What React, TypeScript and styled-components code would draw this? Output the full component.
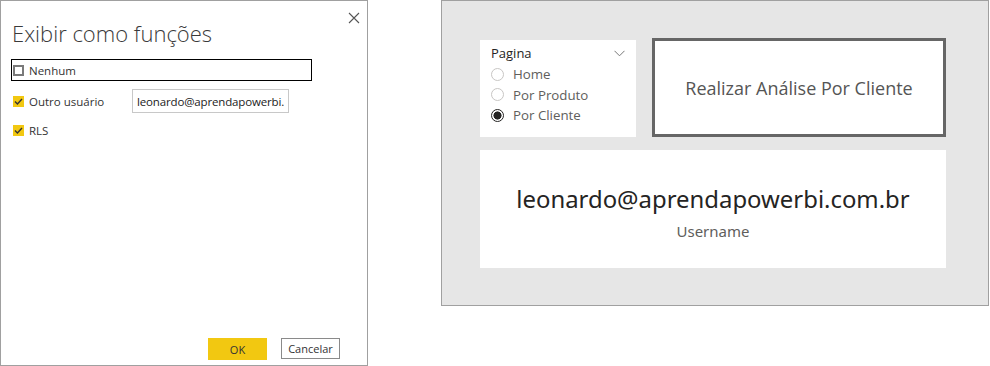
import styled, { createGlobalStyle } from 'styled-components';

const GlobalStyle = createGlobalStyle`
  html, body {
    margin: 0;
    padding: 0;
    background: #ffffff;
  }
  body {
    font-family: "Open Sans", "Noto Sans", sans-serif;
  }
`;

const CheckIcon = () => (
  <svg width="11" height="11" viewBox="0 0 11 11">
    <path d="M2 5.6 L4.4 8 L9 3" fill="none" stroke="#333" strokeWidth="1.4" />
  </svg>
);

const App = () => {
  const options = ['Home', 'Por Produto', 'Por Cliente'];
  const selected = 'Por Cliente';

  return (
    <>
      <GlobalStyle />
      <Page>
        <Dialog>
          <CloseButton>
            <svg width="12" height="12" viewBox="0 0 12 12">
              <path d="M1 1 L11 11 M11 1 L1 11" stroke="#555" strokeWidth="1.1" />
            </svg>
          </CloseButton>
          <DialogTitle>Exibir como funções</DialogTitle>

          <FocusRow>
            <CheckBox />
            <OptionLabel>Nenhum</OptionLabel>
          </FocusRow>

          <OptionRow>
            <CheckBox checked>
              <CheckIcon />
            </CheckBox>
            <OptionLabel>Outro usuário</OptionLabel>
            <UserInput readOnly value="leonardo@aprendapowerbi.com.br" />
          </OptionRow>

          <OptionRow>
            <CheckBox checked>
              <CheckIcon />
            </CheckBox>
            <OptionLabel>RLS</OptionLabel>
          </OptionRow>

          <DialogFooter>
            <PrimaryButton>OK</PrimaryButton>
            <SecondaryButton>Cancelar</SecondaryButton>
          </DialogFooter>
        </Dialog>

        <ReportCanvas>
          <TopRow>
            <Slicer>
              <SlicerHeader>
                <span>Pagina</span>
                <svg width="11" height="7" viewBox="0 0 11 7">
                  <path d="M0.5 0.8 L5.5 5.8 L10.5 0.8" fill="none" stroke="#777" strokeWidth="1" />
                </svg>
              </SlicerHeader>
              {options.map(opt => (
                <RadioRow key={opt}>
                  <Radio active={opt === selected} />
                  <RadioLabel>{opt}</RadioLabel>
                </RadioRow>
              ))}
            </Slicer>
            <ActionButton>Realizar Análise Por Cliente</ActionButton>
          </TopRow>

          <Card>
            <CardValue>leonardo@aprendapowerbi.com.br</CardValue>
            <CardLabel>Username</CardLabel>
          </Card>
        </ReportCanvas>
      </Page>
    </>
  );
};

const Page = styled.div`
  display: flex;
  align-items: flex-start;
  gap: 73px;
  width: 990px;
  height: 366px;
`;

const Dialog = styled.div`
  position: relative;
  box-sizing: border-box;
  width: 368px;
  height: 366px;
  border: 1px solid #a0a0a0;
  display: flex;
  flex-direction: column;
  padding: 0 0 0 10px;
  font-family: "Open Sans", "Noto Sans", sans-serif;
`;

const CloseButton = styled.div`
  position: absolute;
  top: 6px;
  right: 7px;
  width: 12px;
  height: 12px;
`;

const DialogTitle = styled.h1`
  margin: 17px 0 0 1px;
  font-size: 22px;
  font-weight: 300;
  color: #3a3a3a;
  line-height: 30px;
`;

const FocusRow = styled.div`
  display: flex;
  align-items: center;
  box-sizing: border-box;
  width: 301px;
  height: 22px;
  margin-top: 11px;
  border: 1px solid #000;
  padding-left: 1px;
`;

const OptionRow = styled.div`
  display: flex;
  align-items: center;
  height: 24px;
  margin-top: 8px;
  padding-left: 2px;
  & + & {
    margin-top: 5px;
  }
`;

const CheckBox = styled.div<{ checked?: boolean }>`
  box-sizing: border-box;
  width: 11px;
  height: 11px;
  display: flex;
  align-items: center;
  justify-content: center;
  background: ${p => (p.checked ? '#f2c811' : '#fff')};
  border: ${p => (p.checked ? 'none' : '2px solid #7a7a7a')};
  flex-shrink: 0;
`;

const OptionLabel = styled.span`
  margin-left: 5px;
  font-size: 11.5px;
  color: #333;
  width: 103px;
`;

const UserInput = styled.input`
  box-sizing: border-box;
  width: 157px;
  height: 24px;
  border: 1px solid #c8c8c8;
  padding: 0 4px;
  font-family: "Open Sans", "Noto Sans", sans-serif;
  font-size: 11.5px;
  letter-spacing: -0.15px;
  color: #222;
  outline: none;
`;

const DialogFooter = styled.div`
  margin-top: auto;
  display: flex;
  gap: 14px;
  padding: 0 0 5px 197px;
`;

const PrimaryButton = styled.button`
  width: 59px;
  height: 22px;
  border: none;
  background: #f2c811;
  font-family: "Open Sans", "Noto Sans", sans-serif;
  font-size: 11px;
  color: #333;
  padding: 0;
`;

const SecondaryButton = styled.button`
  width: 59px;
  height: 21px;
  border: 1px solid #8a8a8a;
  background: #fff;
  font-family: "Open Sans", "Noto Sans", sans-serif;
  font-size: 11px;
  color: #333;
  padding: 0;
`;

const ReportCanvas = styled.div`
  box-sizing: border-box;
  width: 548px;
  height: 306px;
  border: 1px solid #a0a0a0;
  background: #e6e6e6;
  padding: 37px 0 0 38px;
  display: flex;
  flex-direction: column;
  gap: 13px;
`;

const TopRow = styled.div`
  display: flex;
  gap: 16px;
  align-items: flex-start;
`;

const Slicer = styled.div`
  box-sizing: border-box;
  width: 156px;
  height: 97px;
  margin-top: 2px;
  background: #fff;
  padding: 3px 10px 0 11px;
  font-family: "Open Sans", "Noto Sans", sans-serif;
`;

const SlicerHeader = styled.div`
  display: flex;
  justify-content: space-between;
  align-items: center;
  height: 20px;
  font-size: 13px;
  color: #252423;
  margin-bottom: 1px;
  svg {
    margin-right: 1px;
  }
`;

const RadioRow = styled.div`
  display: flex;
  align-items: center;
  height: 20.5px;
`;

const Radio = styled.span<{ active?: boolean }>`
  box-sizing: border-box;
  width: 13px;
  height: 13px;
  border-radius: 50%;
  border: 1px solid ${p => (p.active ? '#252423' : '#c8c6c4')};
  background: ${p => (p.active ? 'radial-gradient(circle, #252423 0 3.8px, #fff 4.3px)' : '#fff')};
  flex-shrink: 0;
`;

const RadioLabel = styled.span`
  margin-left: 9px;
  font-size: 13.3px;
  color: #605e5c;
`;

const ActionButton = styled.div`
  box-sizing: border-box;
  width: 294px;
  height: 99px;
  border: 3px solid #666;
  background: #fff;
  display: flex;
  align-items: center;
  justify-content: center;
  font-family: "Open Sans", "Noto Sans", sans-serif;
  font-size: 18px;
  color: #555;
`;

const Card = styled.div`
  box-sizing: border-box;
  width: 466px;
  height: 118px;
  background: #fff;
  display: flex;
  flex-direction: column;
  align-items: center;
  padding-top: 33px;
  font-family: "Noto Sans", "Open Sans", sans-serif;
`;

const CardValue = styled.div`
  font-size: 23.9px;
  color: #252423;
  line-height: 32px;
`;

const CardLabel = styled.div`
  margin-top: 6px;
  font-size: 15px;
  color: #605e5c;
  line-height: 20px;
`;

export default App;
